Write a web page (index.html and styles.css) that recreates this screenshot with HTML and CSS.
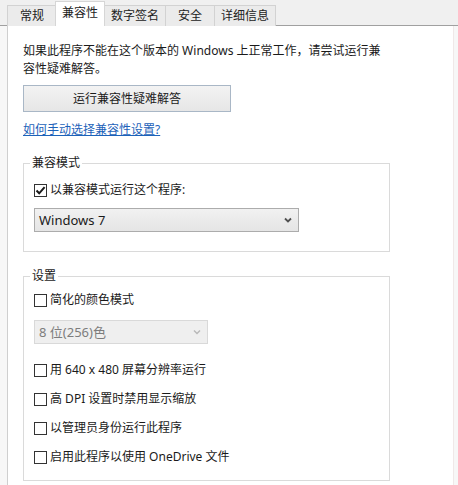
FILE: index.html
```html
<!DOCTYPE html>
<html lang="zh-CN">
<head>
  <meta charset="UTF-8">
  <meta name="viewport" content="width=device-width, initial-scale=1.0">
  <title>属性 - 兼容性</title>
  <link rel="stylesheet" href="styles.css">
</head>
<body>
  <div class="tabs">
    <div class="tab">常规</div>
    <div class="tab ativo">兼容性</div>
    <div class="tab">数字签名</div>
    <div class="tab">安全</div>
    <div class="tab">详细信息</div>
  </div>

  <main class="painel">
    <p class="intro">如果此程序不能在这个版本的 Windows 上正常工作，请尝试运行兼<br>容性疑难解答。</p>
    <button class="botao">运行兼容性疑难解答</button>
    <a class="link" href="#">如何手动选择兼容性设置?</a>

    <fieldset class="grupo grupo-modo">
      <legend>兼容模式</legend>
      <label class="opcao">
        <span class="caixa">
          <svg width="11" height="11" viewBox="0 0 11 11"><path d="M1.5 5.5 L4.2 8.3 L9.6 2.2" fill="none" stroke="#1a1a1a" stroke-width="2"/></svg>
        </span>
        以兼容模式运行这个程序:
      </label>
      <div class="seletor">
        <span>Windows 7</span>
        <svg width="8" height="6" viewBox="0 0 8 6"><path d="M1 1.5 L4 4.5 L7 1.5" fill="none" stroke="#505050" stroke-width="1.8"/></svg>
      </div>
    </fieldset>

    <fieldset class="grupo grupo-config">
      <legend>设置</legend>
      <label class="opcao"><span class="caixa"></span>简化的颜色模式</label>
      <div class="seletor desativado">
        <span>8 位(256)色</span>
        <svg width="8" height="6" viewBox="0 0 8 6"><path d="M1 1.5 L4 4.5 L7 1.5" fill="none" stroke="#b8b8b8" stroke-width="1.4"/></svg>
      </div>
      <label class="opcao depois-seletor"><span class="caixa"></span>用 640 x 480 屏幕分辨率运行</label>
      <label class="opcao"><span class="caixa"></span>高 DPI 设置时禁用显示缩放</label>
      <label class="opcao"><span class="caixa"></span>以管理员身份运行此程序</label>
      <label class="opcao"><span class="caixa"></span>启用此程序以使用 OneDrive 文件</label>
    </fieldset>
  </main>
</body>
</html>
```

FILE: styles.css
```css
body {
  margin: 0;
  background: #f7f7f7;
  font-family: "Noto Sans", "Noto Sans CJK SC", sans-serif;
  font-size: 12px;
  line-height: 18px;
  color: #1a1a1a;
  overflow: hidden;
}
.tabs {
  display: flex;
  align-items: flex-end;
  height: 26px;
  box-sizing: border-box;
  padding-left: 7px;
  background: #f0f0f0;
  border-bottom: 1px solid #a0a0a0;
}
.tab {
  height: 20px;
  line-height: 20px;
  min-width: 36px;
  padding: 0 6px;
  text-align: center;
  background: #ebebeb;
  border: 1px solid #d2d2d2;
  border-bottom: none;
  margin-right: -1px;
  margin-bottom: -1px;
  color: #222;
}
.tab.ativo {
  height: 24px;
  line-height: 22px;
  background: #fff;
  border-color: #d6d6d6;
  margin: 0 -1px -1px -1px;
  position: relative;
  z-index: 1;
}
.painel {
  display: flex;
  flex-direction: column;
  align-items: flex-start;
  background: #fff;
  margin: 0 4px 0 7px;
  border-left: 1px solid #cfcfcf;
  border-right: 1px solid #f0e8e8;
  padding: 16px 0 20px 15px;
}
.intro { margin: 0; }
.botao {
  margin-top: 7px;
  width: 208px;
  height: 27px;
  font: inherit;
  color: #1a1a1a;
  background: linear-gradient(#f3f3f3, #e6e6e6);
  border: 1px solid #a9b7c6;
  border-radius: 0;
}
.link {
  margin-top: 9px;
  color: #1c62b9;
  text-decoration: underline;
}
.grupo {
  width: 367px;
  box-sizing: border-box;
  margin: 15px 0 0;
  border: 1px solid #dadada;
  padding: 0 10px 19px 10px;
  display: flex;
  flex-direction: column;
  align-items: flex-start;
}
.grupo legend {
  padding: 0 2px;
  margin-left: -4px;
  color: #1a1a1a;
}
.grupo-modo { gap: 9px; padding-top: 9px; }
.grupo-config { gap: 11px; padding-top: 6px; padding-bottom: 14px; }
.opcao {
  display: flex;
  align-items: center;
  gap: 3px;
  height: 18px;
}
.caixa {
  width: 11px;
  height: 11px;
  border: 1px solid #333;
  background: #fff;
  display: flex;
  align-items: center;
  justify-content: center;
}
.seletor {
  display: flex;
  align-items: center;
  justify-content: space-between;
  width: 265px;
  height: 24px;
  box-sizing: border-box;
  padding: 0 6px 0 4px;
  font-size: 13px;
  background: linear-gradient(#f1f1f1, #e5e5e5);
  border: 1px solid #acacac;
}
.seletor.desativado {
  width: 174px;
  background: #efefef;
  border-color: #d9d9d9;
  color: #7d7d7d;
}
.depois-seletor { margin-top: 6px; }
```
